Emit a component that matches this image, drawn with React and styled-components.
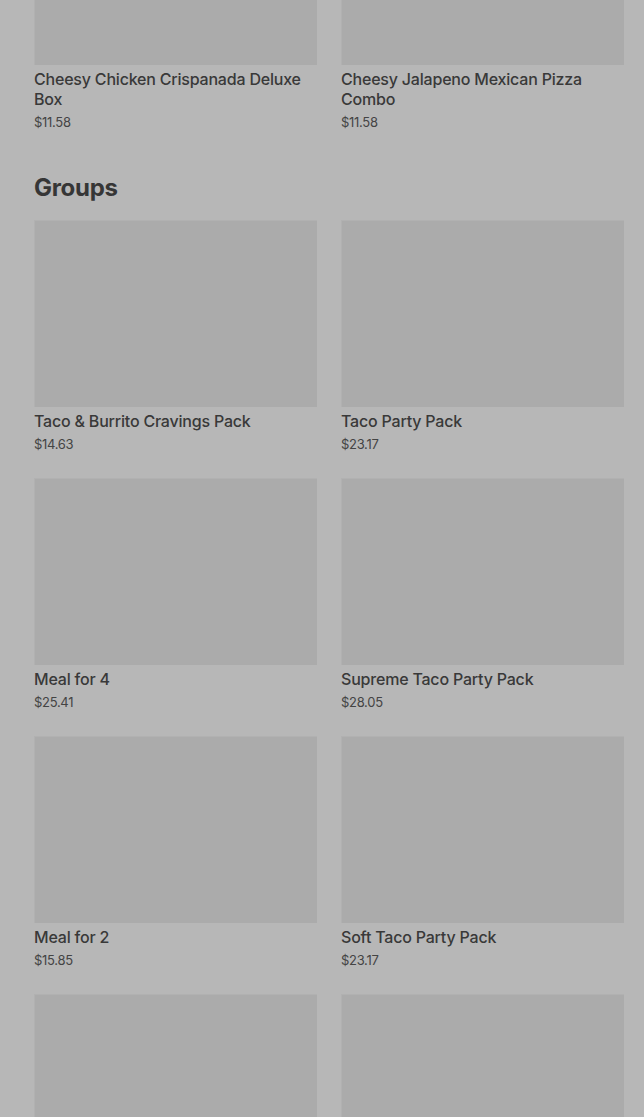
import React from "react";
import styled, { createGlobalStyle } from "styled-components";

const GlobalStyle = createGlobalStyle`
  html, body {
    margin: 0;
    padding: 0;
    background: #b7b7b7;
    font-family: Inter, "Liberation Sans", Arial, sans-serif;
    overflow: hidden;
  }
`;

const Page = styled.div`
  height: 1117px;
  overflow: hidden;
  background: #b7b7b7;
`;

const Scroller = styled.div`
  margin-top: -122px;
  padding: 0 20px 0 34px;
`;

const Section = styled.section`
  margin-bottom: 17px;
`;

const Heading = styled.h2`
  margin: 0 0 17px;
  font-size: 24px;
  line-height: 30px;
  font-weight: 700;
  color: #363636;
  letter-spacing: -0.3px;
`;

const Grid = styled.div`
  display: grid;
  grid-template-columns: 283px 283px;
  column-gap: 24px;
`;

const Card = styled.div`
  padding-bottom: ${({ $bare }) => ($bare ? "0" : "25px")};
`;

const Thumb = styled.div`
  height: 187px;
  background: #ababab;
  box-shadow: inset 1px 1px 0 #b1b1b1;
`;

const Title = styled.div`
  margin-top: 4px;
  font-size: 16px;
  line-height: 20px;
  font-weight: 500;
  color: #393939;
  letter-spacing: -0.2px;
`;

const Price = styled.div`
  margin-top: 4px;
  font-size: 13px;
  line-height: 18px;
  color: #444;
  letter-spacing: -0.3px;
`;

const top = [
  { name: "Cheesy Chicken Crispanada Deluxe Box", price: "$11.58" },
  { name: "Cheesy Jalapeno Mexican Pizza Combo", price: "$11.58" },
];

const groups = [
  { name: "Taco & Burrito Cravings Pack", price: "$14.63" },
  { name: "Taco Party Pack", price: "$23.17" },
  { name: "Meal for 4", price: "$25.41" },
  { name: "Supreme Taco Party Pack", price: "$28.05" },
  { name: "Meal for 2", price: "$15.85" },
  { name: "Soft Taco Party Pack", price: "$23.17" },
];

const Item = ({ name, price }) => (
  <Card>
    <Thumb />
    <Title>{name}</Title>
    <Price>{price}</Price>
  </Card>
);

const App = () => (
  <Page>
    <GlobalStyle />
    <Scroller>
      <Section>
        <Grid>
          {top.map((i) => (
            <Item key={i.name} {...i} />
          ))}
        </Grid>
      </Section>
      <Section>
        <Heading>Groups</Heading>
        <Grid>
          {groups.map((i) => (
            <Item key={i.name} {...i} />
          ))}
          {/* next row, only its pictures are in view */}
          <Card $bare>
            <Thumb />
          </Card>
          <Card $bare>
            <Thumb />
          </Card>
        </Grid>
      </Section>
    </Scroller>
  </Page>
);

export default App;
